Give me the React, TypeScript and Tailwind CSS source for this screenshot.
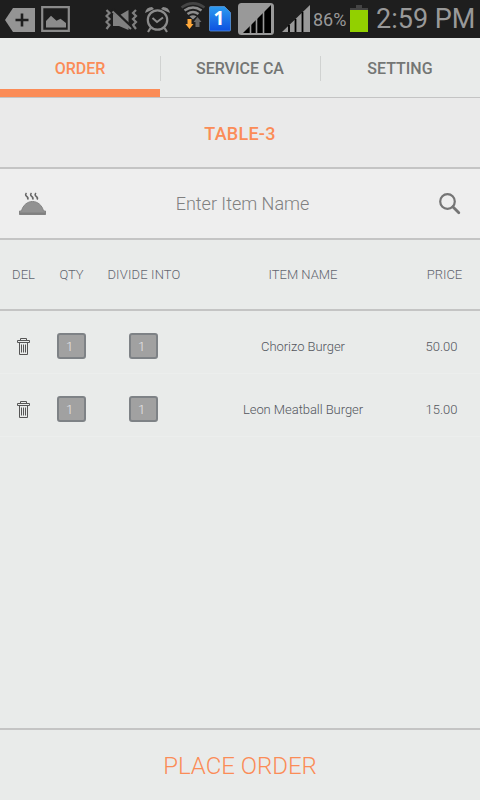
import React from 'react';
import { clsx } from 'clsx';

interface OrderItem {
  name: string;
  qty: number;
  divide: number;
  price: string;
}

const tabs = ['ORDER', 'SERVICE CA', 'SETTING'];

const items: OrderItem[] = [
  { name: 'Chorizo Burger', qty: 1, divide: 1, price: '50.00' },
  { name: 'Leon Meatball Burger', qty: 1, divide: 1, price: '15.00' },
];

const StatusBar: React.FC = () => (
  <header className="flex h-[38px] shrink-0 bg-[#1e1e1e] text-[#999]">
    {/* keyboard tag */}
    <svg className="ml-[5px] shrink-0" width="30" height="38" viewBox="0 0 30 38">
      <path d="M8 8h22v24H8L0 20z" fill="#949494" />
      <path d="M17 13.500v13M10.500 20h13" stroke="#1e1e1e" strokeWidth="2.600" />
    </svg>
    {/* screenshot */}
    <svg className="ml-[6px] shrink-0" width="29" height="38" viewBox="0 0 29 38">
      <path d="M1.200 7.200h26.600v23.600H1.200z" fill="none" stroke="#8b8b8b" strokeWidth="2.200" />
      <path d="M5 27.500V21l5-5.300 5.500 5 4-2L25 23v4.500z" fill="#8b8b8b" />
    </svg>
    {/* muted vibrate */}
    <svg className="ml-[35px] shrink-0" width="33" height="38" viewBox="0 0 33 38">
      <path d="M1.500 10l3 3-3 3 3 3-3 3 3 3-3 4M31 10l-3 3 3 3-3 3 3 3-3 3 3 4" fill="none" stroke="#808080" strokeWidth="2.200" />
      <path d="M8 14v12h6l9.500 4V10L15 15z" fill="#808080" />
      <path d="M7.500 9l19 18" stroke="#1e1e1e" strokeWidth="3" />
      <path d="M7.500 11.500l18.500 17.500" stroke="#808080" strokeWidth="2" />
    </svg>
    {/* alarm */}
    <svg className="ml-[7px] shrink-0" width="25" height="38" viewBox="0 0 25 38" fill="none" stroke="#8b8b8b">
      <circle cx="12.500" cy="20" r="9.700" strokeWidth="2.200" />
      <path d="M7.500 18l4.500 4 6-4.500" strokeWidth="2" />
      <path d="M0 13Q1 7 7 7l2 2zM25 13Q24 7 18 7l-2 2z" fill="#8b8b8b" stroke="none" />
      <path d="M5.500 28l-2.500 4M19.500 28l2.500 4" strokeWidth="2.200" />
    </svg>
    {/* wifi with traffic arrows */}
    <svg className="ml-[10px] shrink-0" width="26" height="38" viewBox="0 0 26 38" fill="none" strokeWidth="2.600">
      <path d="M1.500 7.500Q13 -.8 24.500 7.500" stroke="#454545" />
      <path d="M4.500 10.500Q13 4.500 21.500 10.500M7.500 14Q13 10 18.500 14" stroke="#8d8d8d" />
      <path d="M9.500 16.300q3.500-2.200 7 0L13 19.500z" fill="#8d8d8d" stroke="none" />
      <path d="M7.500 19h4v5h2l-4 5-4-5h2z" fill="#ffa83a" stroke="none" />
      <path d="M15.500 27v-5h-2l4-5 4 5h-2v5z" fill="#6a6a6a" stroke="none" />
    </svg>
    {/* sim slot, the digit sits on the card */}
    <div className="relative ml-[3px] w-[22px] shrink-0">
      <svg width="22" height="38" viewBox="0 0 22 38">
        <defs>
          <linearGradient id="sim" x1="0" y1="0" x2="0" y2="1">
            <stop offset="0" stopColor="#2c9cf0" />
            <stop offset="1" stopColor="#0d50e0" />
          </linearGradient>
        </defs>
        <path d="M1.500 6.500h14l6 6V30a1 1 0 0 1-1 1h-19a1 1 0 0 1-1-1V7.500a1 1 0 0 1 1-1z" fill="url(#sim)" stroke="#5a96d8" strokeWidth=".8" />
      </svg>
      <span className="absolute inset-x-0 top-[8px] pr-[2px] text-center font-['Open_Sans',sans-serif] text-[19px] leading-5 font-bold text-white">1</span>
    </div>
    {/* sim signal */}
    <svg className="ml-[7px] shrink-0" width="36" height="38" viewBox="0 0 36 38">
      <rect y="3" width="36" height="32" rx="3.500" fill="#999" />
      <path d="M5 33L33 5v28z" fill="#000" />
      <path d="M12.500 24v9M18.500 18v15M25.500 11v22" stroke="#999" strokeWidth="1.600" />
    </svg>
    {/* signal */}
    <svg className="ml-[8px] shrink-0" width="28" height="38" viewBox="0 0 28 38">
      <path d="M0 32L28 5v27z" fill="#999" />
      <path d="M7 25v7M13.500 19v13M20.500 12v20" stroke="#000" strokeWidth="1.800" />
    </svg>
    <span className="ml-[3px] w-[34px] shrink-0 text-[18px] leading-[40px] whitespace-nowrap">86%</span>
    {/* battery */}
    <svg className="ml-[3px] shrink-0" width="18" height="38" viewBox="0 0 18 38">
      <path d="M6 5h6v3h6v2H0V8h6z" fill="#444" />
      <path d="M0 10h18v22H0z" fill="#92d000" />
    </svg>
    <span className="ml-[8px] text-[27px] leading-[38px] whitespace-nowrap">2:59 PM</span>
  </header>
);

const TrashIcon: React.FC = () => (
  <svg width="13" height="18" viewBox="0 0 13 18" fill="none" stroke="#555" strokeWidth="1">
    <path d="M3.500 2.500v-2h6v2M.5 2.500h12v2H.5zM2.500 4.500v12h8v-12M4.500 6.500v8M6.500 6.500v8M8.500 6.500v8" />
  </svg>
);

const FoodIcon: React.FC = () => (
  <svg width="27" height="24" viewBox="0 0 27 24">
    <path d="M7.500 1q-1.800 1.800 .2 3.300T8.500 7.500M12.500 1q-1.800 1.800 .2 3.300T13.500 7.500M17 1q-1.800 1.800 .2 3.300T18 7.500" fill="none" stroke="#666" strokeWidth="1.600" />
    <path d="M.5 22.500v-3.500h2C4 13 8.500 9.500 13.500 9.500S23 13 24.500 19h2v3.500z" fill="#929292" stroke="#858585" />
    <path d="M.5 21.500h26" stroke="#808080" strokeWidth="2" />
  </svg>
);

const SearchIcon: React.FC = () => (
  <svg width="22" height="22" viewBox="0 0 22 22" fill="none" stroke="#757575">
    <circle cx="8.500" cy="8.500" r="7.300" strokeWidth="2.200" />
    <path d="M13.800 13.800l6 6" strokeWidth="2.800" strokeLinecap="round" />
  </svg>
);

const NumberBox: React.FC<{ value: number }> = ({ value }) => (
  <div className="h-[26px] w-[29px] rounded-[3px] border-2 border-[#7e8286] bg-[#a1a1a1] pl-[7px] text-[13px] leading-[23px] text-[#e8e8e8]">
    {value}
  </div>
);

const App: React.FC = () => {
  return (
    <div className="flex h-[800px] w-[480px] flex-col overflow-hidden bg-[#e9ebea] font-['Roboto',sans-serif]">
      <StatusBar />

      <nav className="flex h-[60px] shrink-0 border-b border-[#c4c4c4] text-[16px] font-medium">
        {tabs.map((tab, i) => (
          <div
            key={tab}
            className={clsx(
              'relative flex w-1/3 items-center justify-center border-b-8 pt-[11px]',
              i === 0 ? 'border-[#fb8c57] text-[#fb8c57]' : 'border-transparent text-[#747674]'
            )}
          >
            {i > 0 && <span className="absolute top-[18px] left-0 h-[25px] w-px bg-[#d0d2d1]" />}
            {tab}
          </div>
        ))}
      </nav>

      <h1 className="flex h-[71px] shrink-0 items-center justify-center border-b-2 border-[#c4c4c4] bg-[#eaeaea] pt-[2px] text-[18px] font-medium tracking-[0.25px] text-[#fb8c57]">
        TABLE-3
      </h1>

      <div className="flex h-[71px] shrink-0 items-center justify-between border-b-2 border-[#c4c4c4] bg-[#eee] pr-[19px] pl-[19px]">
        <FoodIcon />
        <span className="text-[18px] font-light text-[#808080]">Enter Item Name</span>
        <SearchIcon />
      </div>

      <div className="flex h-[71px] shrink-0 items-center border-b-2 border-[#c4c4c4] text-[13px] font-light text-[#62656f]">
        <span className="w-[47px] text-center">DEL</span>
        <span className="w-[49px] text-center">QTY</span>
        <span className="w-[96px] text-center tracking-[0.15px]">DIVIDE INTO</span>
        <span className="w-[222px] text-center">ITEM NAME</span>
        <span className="w-[61px] text-center">PRICE</span>
      </div>

      <main className="flex-1">
        {items.map((item) => (
          <div key={item.name} className="flex h-[63px] items-center border-b border-[#eceeed] pt-[8px] text-[13px] font-light text-[#53565d]">
            <div className="flex w-[47px] justify-center pt-[2px]">
              <TrashIcon />
            </div>
            <div className="flex w-[49px] justify-center">
              <NumberBox value={item.qty} />
            </div>
            <div className="flex w-[95px] justify-center">
              <NumberBox value={item.divide} />
            </div>
            <span className="w-[224px] pt-[2px] text-center tracking-[-0.05px]">{item.name}</span>
            <span className="w-[53px] pt-[2px] text-center">{item.price}</span>
          </div>
        ))}
      </main>

      <button className="h-[72px] shrink-0 border-t-2 border-[#c4c4c4] pt-[2px] text-[24px] font-light text-[#fb8c57]">
        PLACE ORDER
      </button>
    </div>
  );
};

export default App;
